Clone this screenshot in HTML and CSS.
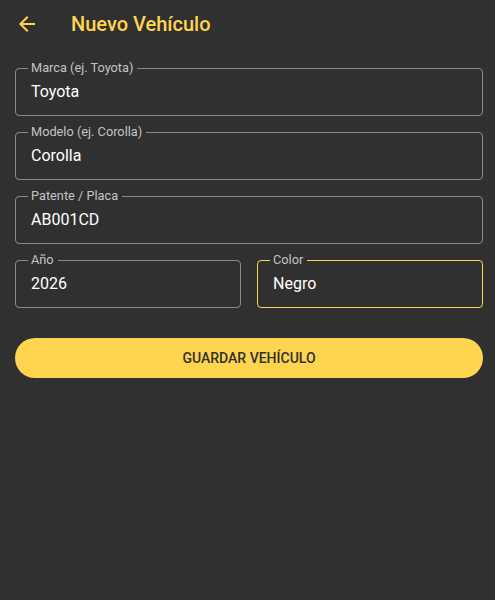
FILE: index.html
```html
<!DOCTYPE html>
<html lang="es">
<head>
<meta charset="UTF-8" />
<meta name="viewport" content="width=device-width, initial-scale=1" />
<title>Nuevo Vehículo</title>
<link rel="stylesheet" href="styles.css">
</head>
<body>

<header class="appbar">
  <svg class="back" viewBox="0 0 24 24" width="24" height="24">
    <path d="M20 11H7.83l5.59-5.59L12 4l-8 8 8 8 1.41-1.41L7.83 13H20v-2z" fill="#ffd54f"/>
  </svg>
  <h1>Nuevo Vehículo</h1>
</header>

<main class="form">
  <fieldset class="field">
    <legend>Marca (ej. Toyota)</legend>
    <div class="value">Toyota</div>
  </fieldset>
  <fieldset class="field">
    <legend>Modelo (ej. Corolla)</legend>
    <div class="value">Corolla</div>
  </fieldset>
  <fieldset class="field">
    <legend>Patente / Placa</legend>
    <div class="value">AB001CD</div>
  </fieldset>
  <div class="row">
    <fieldset class="field">
      <legend>Año</legend>
      <div class="value">2026</div>
    </fieldset>
    <fieldset class="field focused">
      <legend>Color</legend>
      <div class="value">Negro</div>
    </fieldset>
  </div>
  <button class="save">GUARDAR VEHÍCULO</button>
</main>

</body>
</html>
```

FILE: styles.css
```css
body {
  margin: 0;
  background: #303030;
  color: #fff;
  font-family: Roboto, "Noto Sans", sans-serif;
}
.appbar {
  height: 48px;
  display: flex;
  align-items: center;
  padding-left: 15px;
}
.appbar .back {
  display: block;
}
.appbar h1 {
  margin: 0 0 0 32px;
  font-size: 20px;
  font-weight: 500;
  color: #ffd54f;
}
.form {
  padding: 13px 12px 0 15px;
  display: flex;
  flex-direction: column;
  gap: 9px;
}
.field {
  margin: 0;
  min-width: 0;
  border: 1px solid #8a8a8a;
  border-radius: 4px;
  padding: 1px 12px 7px;
}
.field legend {
  font-size: 12.75px;
  line-height: 14px;
  padding: 0 4px 0 3px;
  color: #c4c4c4;
}
.field .value {
  font-size: 16px;
  line-height: 32px;
  padding-left: 3px;
}
.field.focused {
  border-color: #ffd54f;
}
.row {
  display: grid;
  grid-template-columns: 1fr 1fr;
  gap: 16px;
}
.save {
  margin-top: 21px;
  height: 40px;
  border: none;
  border-radius: 20px;
  background: #ffd54f;
  color: #303030;
  font-family: Roboto, sans-serif;
  font-size: 14px;
  font-weight: 500;
}
```
